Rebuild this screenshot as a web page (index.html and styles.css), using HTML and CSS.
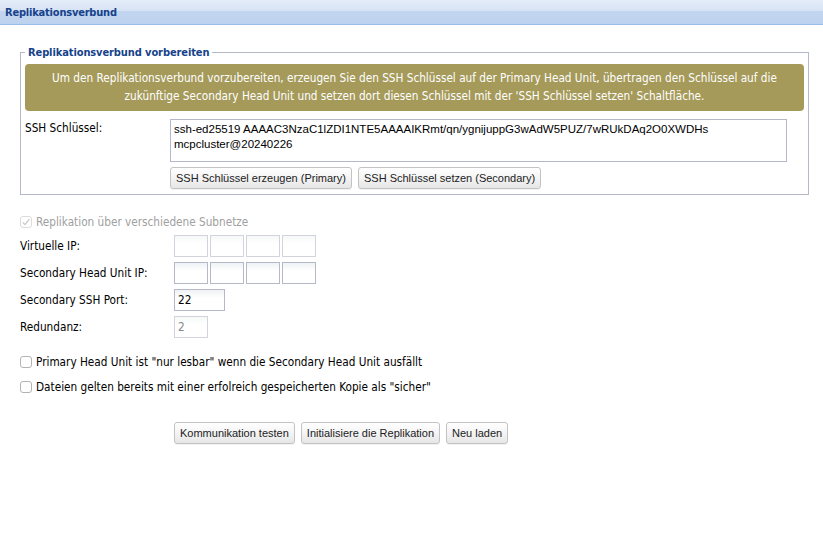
FILE: index.html
```html
<!DOCTYPE html>
<html lang="de">
<head>
<meta charset="utf-8">
<title>Replikationsverbund</title>
<link rel="stylesheet" href="styles.css">
</head>
<body>
<div class="header"><span class="header-title">Replikationsverbund</span></div>
<div class="main">
  <fieldset class="group">
    <legend class="group-legend">Replikationsverbund vorbereiten</legend>
    <div class="notice">Um den Replikationsverbund vorzubereiten, erzeugen Sie den SSH Schlüssel auf der Primary Head Unit, übertragen den Schlüssel auf die zukünftige Secondary Head Unit und setzen dort diesen Schlüssel mit der 'SSH Schlüssel setzen' Schaltfläche.</div>
    <div class="ssh-row">
      <div class="ssh-label">SSH Schlüssel:</div>
      <div class="ssh-field">
        <div class="textarea">ssh-ed25519 AAAAC3NzaC1lZDI1NTE5AAAAIKRmt/qn/ygnijuppG3wAdW5PUZ/7wRUkDAq2O0XWDHs mcpcluster@20240226</div>
        <div class="btn-row">
          <button class="btn" type="button">SSH Schlüssel erzeugen (Primary)</button>
          <button class="btn" type="button">SSH Schlüssel setzen (Secondary)</button>
        </div>
      </div>
    </div>
  </fieldset>

  <div class="check-row disabled first-check">
    <span class="cb cb-disabled"><svg viewBox="0 0 12 12" width="12" height="12"><path d="M2.8 6.3 L5 8.6 L9.4 3.2" fill="none" stroke="#c8c8c8" stroke-width="1.2"/></svg></span>
    <span class="check-label">Replikation über verschiedene Subnetze</span>
  </div>

  <div class="form">
    <div class="form-row">
      <div class="form-label">Virtuelle IP:</div>
      <div class="ip-group">
        <div class="field field-ip field-light"></div>
        <div class="field field-ip field-light"></div>
        <div class="field field-ip field-light"></div>
        <div class="field field-ip field-light"></div>
      </div>
    </div>
    <div class="form-row">
      <div class="form-label">Secondary Head Unit IP:</div>
      <div class="ip-group">
        <div class="field field-ip"></div>
        <div class="field field-ip"></div>
        <div class="field field-ip"></div>
        <div class="field field-ip"></div>
      </div>
    </div>
    <div class="form-row">
      <div class="form-label">Secondary SSH Port:</div>
      <div class="field field-port">22</div>
    </div>
    <div class="form-row">
      <div class="form-label">Redundanz:</div>
      <div class="field field-small field-light field-muted">2</div>
    </div>
  </div>

  <div class="check-row second-block">
    <span class="cb"></span>
    <span class="check-label">Primary Head Unit ist "nur lesbar" wenn die Secondary Head Unit ausfällt</span>
  </div>
  <div class="check-row next-check">
    <span class="cb"></span>
    <span class="check-label">Dateien gelten bereits mit einer erfolreich gespeicherten Kopie als "sicher"</span>
  </div>

  <div class="btn-row bottom-buttons">
    <button class="btn" type="button">Kommunikation testen</button>
    <button class="btn" type="button">Initialisiere die Replikation</button>
    <button class="btn" type="button">Neu laden</button>
  </div>
</div>
</body>
</html>
```

FILE: styles.css
```css
html, body {
  margin: 0;
  padding: 0;
  background: #ffffff;
}
body {
  font-family: "DejaVu Sans Condensed", "DejaVu Sans", sans-serif;
  font-size: 11.7px;
  color: #000;
  width: 823px;
  height: 540px;
  overflow: hidden;
}

.header {
  height: 24px;
  border-bottom: 1px solid #99bbe8;
  background: linear-gradient(#e4ecf8 0%, #d7e3f5 44%, #c2d5f0 48%, #bdd2ef 100%);
  display: flex;
  align-items: center;
  padding-left: 5px;
}
.header-title {
  font-weight: bold;
  color: #15428b;
  font-size: 11px;
  letter-spacing: -0.2px;
}

.main {
  padding: 20px 14px 0 20px;
}

.group {
  margin: 0;
  border: 1px solid #b5b8c8;
  padding: 4px 4px 5px 4px;
}
.group-legend {
  padding: 0 3px;
  margin-left: 0;
  font-weight: bold;
  font-size: 11px;
  letter-spacing: -0.1px;
  color: #15428b;
  line-height: 15px;
}

.notice {
  background: #a59a5a;
  color: #ffffff;
  border-radius: 4px;
  text-align: center;
  line-height: 18px;
  padding: 5px 10px 6px;
}

.ssh-row {
  display: flex;
  margin-top: 8px;
}
.ssh-label {
  width: 145px;
  padding-top: 2px;
}
.ssh-field {
  display: flex;
  flex-direction: column;
}
.textarea {
  box-sizing: border-box;
  width: 617px;
  height: 43px;
  border: 1px solid #b5b8c8;
  padding: 2px 3px;
  font-family: "Liberation Sans", Arial, sans-serif;
  font-size: 11.5px;
  line-height: 15px;
  color: #000;
}

.btn-row {
  display: flex;
  gap: 6px;
  margin-top: 5px;
}
.btn {
  box-sizing: border-box;
  height: 22px;
  margin: 0;
  padding: 0 5px;
  border: 1px solid #c3c3c3;
  border-radius: 3px;
  background: linear-gradient(#ffffff 0%, #f4f4f4 50%, #e6e6e6 100%);
  font-family: "Liberation Sans", Arial, sans-serif;
  font-size: 11px;
  color: #222;
  box-shadow: 0 1px 0 rgba(0,0,0,0.05);
}

.check-row {
  display: flex;
  align-items: center;
  height: 16px;
}
.first-check {
  margin-top: 19px;
}
.second-block {
  margin-top: 16px;
}
.next-check {
  margin-top: 9px;
}
.cb {
  box-sizing: border-box;
  width: 12px;
  height: 12px;
  border: 1px solid #b3b3b3;
  border-radius: 3px;
  background: #fff;
  margin-right: 4px;
  display: flex;
}
.cb-disabled {
  border-color: #dcdcdc;
}
.cb svg {
  margin: -1px;
}
.disabled .check-label {
  color: #a0a0a0;
}

.form {
  margin-top: 5px;
  padding-left: 0;
}
.form-row {
  display: flex;
  align-items: center;
  height: 22px;
  margin-bottom: 5px;
}
.form-label {
  width: 154px;
}
.ip-group {
  display: flex;
  gap: 2px;
}
.field {
  box-sizing: border-box;
  height: 22px;
  border: 1px solid #b5b8c8;
  background: linear-gradient(#eef2f3 0%, #ffffff 40%);
  padding: 0 3px;
  line-height: 20px;
}
.field-ip {
  width: 34px;
}
.field-port {
  width: 51px;
}
.field-small {
  width: 34px;
}
.field-light {
  border-color: #d2d3dc;
  background: linear-gradient(#f6f8f8 0%, #ffffff 40%);
}
.field-muted {
  color: #888;
}

.bottom-buttons {
  margin-top: 27px;
  margin-left: 154px;
}
```
